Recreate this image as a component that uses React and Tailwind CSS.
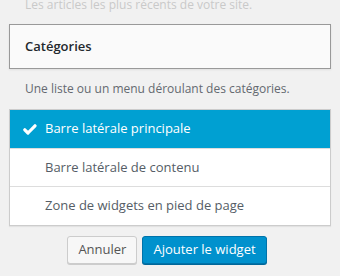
import React from "react";

export default function App() {
  const rows = [
    { label: "Barre latérale principale", selected: true },
    { label: "Barre latérale de contenu" },
    { label: "Zone de widgets en pied de page" },
  ];
  return (
    <div className="w-[340px] h-[276px] overflow-hidden bg-[#f1f1f1] font-['Open_Sans',sans-serif] text-[#23282d]">
      <p className="mt-[-4px] ml-[25px] text-[12px] leading-[17px] text-[#c9c9c9]">
        Les articles les plus récents de votre site.
      </p>
      <div className="mx-[9px] mt-[11px] h-[45px] border border-[#999] bg-[#fafafa] shadow-[0_1px_2px_rgba(0,0,0,0.08)] flex items-center pl-[15px]">
        <span className="text-[13px] font-semibold text-[#23282d]">Catégories</span>
      </div>
      <p className="ml-[25px] mt-[11px] text-[12px] leading-[18px] text-[#646970]">
        Une liste ou un menu déroulant des catégories.
      </p>
      <div className="mx-[9px] mt-[11px] border border-[#ccc] bg-white shadow-[0_1px_1px_rgba(0,0,0,0.06)]">
        {rows.map((r, i) => (
          <div
            key={i}
            className={
              r.selected
                ? "h-[39px] flex items-center bg-[#00a0d2] text-white border-b border-[#ddd]"
                : i === rows.length - 1
                ? "h-[38px] flex items-center text-[#555d66]"
                : "h-[38px] flex items-center text-[#555d66] border-b border-[#ddd]"
            }
          >
            <div className="w-[35px] shrink-0 flex items-center">
              {r.selected && (
                <svg className="ml-[13px]" width="14" height="11" viewBox="0 0 14 11">
                  <path d="M1.8 5.8 L5 9 L12 1.8" fill="none" stroke="white" strokeWidth="3.2" strokeLinecap="round" strokeLinejoin="round" />
                </svg>
              )}
            </div>
            <span className="text-[13px]">{r.label}</span>
          </div>
        ))}
      </div>
      <div className="mt-[10px] flex justify-center gap-[5px] pr-[6px]">
        <button className="h-[28px] w-[70px] rounded-[3px] border border-[#ccc] bg-[#f7f7f7] text-[13px] text-[#555] shadow-[0_1px_0_#ccc]">
          Annuler
        </button>
        <button className="h-[28px] px-[10px] rounded-[3px] border border-[#0073aa] bg-[#0091cd] text-[13px] text-white shadow-[0_1px_0_#006799]">
          Ajouter le widget
        </button>
      </div>
    </div>
  );
}
